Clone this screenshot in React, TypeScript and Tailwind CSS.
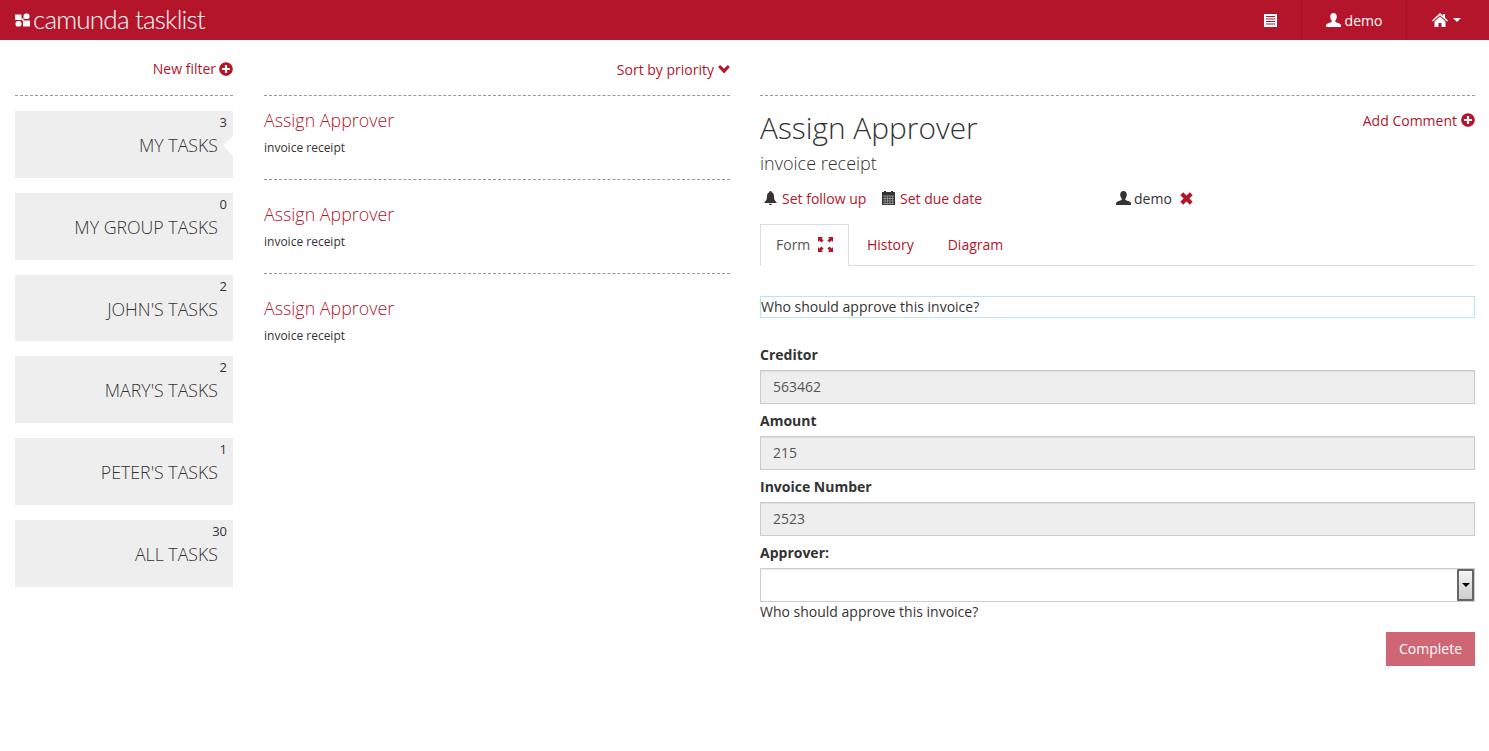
import { FaPlusCircle } from "react-icons/fa";

const filters = [
  { name: "MY TASKS", count: 3, active: true },
  { name: "MY GROUP TASKS", count: 0 },
  { name: "JOHN'S TASKS", count: 2 },
  { name: "MARY'S TASKS", count: 2 },
  { name: "PETER'S TASKS", count: 1 },
  { name: "ALL TASKS", count: 30 },
];

const fields = [
  { label: "Creditor", value: "563462" },
  { label: "Amount", value: "215" },
  { label: "Invoice Number", value: "2523" },
];

const Logo = () => (
  <svg width="15" height="14" viewBox="0 0 15 14" fill="white">
    <rect x="0" y="1.5" width="6.5" height="5.5" />
    <rect x="8.5" y="0.5" width="6" height="5.5" rx="2.6" />
    <rect x="0.5" y="8" width="6" height="5.5" rx="2.6" />
    <rect x="8" y="7.5" width="7" height="6" />
    <path d="M6 6.5l2.5-2v4z" />
  </svg>
);

const ListIcon = () => (
  <svg width="13" height="13" viewBox="0 0 13 13">
    <rect width="13" height="13" fill="white" />
    <path d="M2 2.5h9M2 5h9M2 7.500h9M2 10h9" stroke="#b5152b" strokeWidth="1" />
  </svg>
);

const ExpandIcon = () => (
  <svg width="15" height="15" viewBox="0 0 15 15" fill="#b5152b">
    <path d="M0 0h5L3.6 1.4 5.6 3.4 3.4 5.6 1.4 3.6 0 5zM15 0v5L13.6 3.6 11.6 5.6 9.4 3.4 11.4 1.4 10 0zM0 15v-5l1.4 1.4 2-2 2.2 2.2-2 2L5 15zM15 15h-5l1.4-1.4-2-2 2.2-2.2 2 2L15 10z" />
  </svg>
);

// glyphicon style bust, head narrowing to the neck and wide shoulders
const UserIcon = () => (
  <svg width="15" height="14" viewBox="0 0 15 14" fill="currentColor">
    <path d="M7.5 0C5.4 0 4.2 1.5 4.2 3.6c0 1.6.6 3 1.5 3.9v1.2C4.6 9.6.9 10.2.2 11.600L0 14h15l-.2-2.400c-.7-1.400-4.400-2-5.500-2.900V7.500c.9-.9 1.500-2.300 1.500-3.900C10.800 1.500 9.600 0 7.500 0z" />
  </svg>
);

const HomeIcon = () => (
  <svg width="16" height="14" viewBox="0 0 16 14" fill="currentColor">
    <path d="M8 0l3 2.800V1h2v3.700L16 7.500l-1 1-7-6.300-7 6.300-1-1z" />
    <path d="M8 3.500l5.500 5V14H9.500v-4h-3v4H2.500V8.500z" />
  </svg>
);

const BellIcon = () => (
  <svg width="13" height="14" viewBox="0 0 13 14" fill="currentColor">
    <path d="M6.500 0C5.800 0 5.400.5 5.400 1.200 3.600 1.800 3 3.400 3 5.200 3 8 2.400 9.600.5 11v1h12v-1C10.600 9.600 10 8 10 5.200c0-1.800-.6-3.400-2.400-4C7.600.5 7.200 0 6.500 0z" />
    <path d="M5 12.700h3C8 13.500 7.300 14 6.500 14S5 13.500 5 12.700z" />
  </svg>
);

const CalendarIcon = () => (
  <svg width="13" height="14" viewBox="0 0 13 14">
    <rect y="1" width="13" height="13" fill="#333" />
    <path d="M3 0v2.500M10 0v2.500" stroke="#333" strokeWidth="2" />
    <path d="M1 5h11M1 7.500h11M1 10h11M1 12.500h11M3 4.500v9M5.500 4.500v9M8 4.500v9M10.500 4.500v9" stroke="#999" strokeWidth="0.8" />
  </svg>
);

const ChevronIcon = () => (
  <svg width="12" height="9" viewBox="0 0 13 10" fill="#b5152b">
    <path d="M2.200 0L6.500 4.300 10.800 0 13 2.200 6.500 9.500 0 2.200z" />
  </svg>
);

const RemoveIcon = () => (
  <svg width="13" height="13" viewBox="0 0 13 13" fill="#b5152b">
    <path d="M3.200.3L6.500 3.600 9.800.3 12.700 3.200 9.400 6.500 12.700 9.800 9.800 12.700 6.500 9.400 3.200 12.700.3 9.800 3.600 6.500.3 3.200z" />
  </svg>
);

const App = () => {
  return (
    <div className="min-h-[751px] bg-white text-[14px] text-[#333] font-['Open_Sans',sans-serif]">
      <header className="h-10 bg-[#b5152b] flex items-center text-white">
        <div className="pl-[15px] flex items-center gap-[3px]">
          <Logo />
          <span className="font-['Lato',sans-serif] font-light text-[26px] leading-[38px] pb-[2px] tracking-[-0.8px]">camunda tasklist</span>
        </div>
        <div className="ml-auto flex h-full">
          <div className="w-[63px] flex items-center justify-center border-r border-[#a01226]"><ListIcon /></div>
          <div className="w-[105px] flex items-center justify-center gap-[4px] border-r border-[#a01226]">
            <UserIcon />
            <span>demo</span>
          </div>
          <div className="w-[82px] flex items-center gap-[5px] pl-[25px]">
            <HomeIcon />
            <span className="w-0 h-0 border-x-4 border-x-transparent border-t-4 border-t-white" />
          </div>
        </div>
      </header>

      <div className="flex pl-[15px] pr-[14px]">
        <aside className="w-[218px] shrink-0">
          <div className="h-[56px] border-b border-dashed border-[#999] flex items-center justify-end gap-[3px] pt-[2px] text-[#b5152b]">
            <span>New filter</span>
            <FaPlusCircle size={14} />
          </div>
          <div className="mt-[15px] flex flex-col gap-[15px]">
            {filters.map((f) => (
              <div key={f.name} className="relative h-[66.8px] bg-[#eee] pr-[15px] text-right">
                <div className="absolute right-[6px] top-[3px] text-[13px] leading-[16px]">{f.count}</div>
                <div className="pt-[21px] text-[17.75px] leading-[26px] font-light">{f.name}</div>
                {f.active && (
                  <span className="absolute right-0 top-[25px] w-0 h-0 border-y-[10px] border-y-transparent border-r-[10px] border-r-white" />
                )}
              </div>
            ))}
          </div>
        </aside>

        <main className="w-[466px] ml-[31px] shrink-0">
          <div className="h-[56px] border-b border-dashed border-[#999] flex items-center justify-end gap-[4px] pt-[4px] text-[#b5152b]">
            <span>Sort by priority</span>
            <ChevronIcon />
          </div>
          {[0, 1, 2].map((i) => (
            <div
              key={i}
              className={`${i === 0 ? "h-[84px] pt-[11px]" : "h-[94px] pt-[21px]"} ${i < 2 ? "border-b border-dashed border-[#999]" : ""}`}
            >
              <div className="text-[17.85px] leading-[26px] font-light text-[#b5152b]">Assign Approver</div>
              <div className="mt-[6px] text-[12px] leading-[17px]">invoice receipt</div>
            </div>
          ))}
        </main>

        <section className="w-[715px] ml-[30px] shrink-0">
          <div className="h-[56px] border-b border-dashed border-[#999]" />
          <div className="flex justify-between">
            <h1 className="mt-[10px] text-[29.85px] leading-[44px] font-light">Assign Approver</h1>
            <div className="mt-[14px] flex items-center gap-[4px] h-[20px] text-[#b5152b]">
              <span>Add Comment</span>
              <FaPlusCircle size={14} />
            </div>
          </div>
          <div className="text-[18px] leading-[26px] font-light">invoice receipt</div>
          <div className="mt-[12px] flex items-center h-[20px]">
            <div className="w-[122px] pl-[4px] flex items-center gap-[5px]">
              <BellIcon />
              <span className="text-[#b5152b]">Set follow up</span>
            </div>
            <div className="w-[234px] flex items-center gap-[5px]">
              <CalendarIcon />
              <span className="text-[#b5152b]">Set due date</span>
            </div>
            <div className="flex items-center gap-[3px]">
              <UserIcon />
              <span className="mr-[5px]">demo</span>
              <RemoveIcon />
            </div>
          </div>
          <div className="mt-[16px] flex h-[42px] border-b border-[#ddd]">
            <div className="h-[42px] w-[89px] border border-[#ddd] border-b-white bg-white flex items-center pl-[15px] pb-[2px] gap-[8px] text-[#555]">
              <span>Form</span>
              <ExpandIcon />
            </div>
            <div className="ml-[18px] leading-[41px] text-[#b5152b]">History</div>
            <div className="ml-[34px] leading-[41px] text-[#b5152b]">Diagram</div>
          </div>
          <div className="mt-[30px] h-[22px] border border-[#b6e8ee] leading-[20px]">Who should approve this invoice?</div>
          <div className="mt-[27px]">
            {fields.map((f) => (
              <div key={f.label} className="h-[66px]">
                <div className="font-bold leading-[20px] mb-[5px]">{f.label}</div>
                <div className="h-[34px] bg-[#eee] border border-[#ccc] px-3 leading-[32px] text-[#555] shadow-[inset_0_1px_1px_rgba(0,0,0,0.075)]">{f.value}</div>
              </div>
            ))}
            <div className="font-bold leading-[20px] mb-[5px]">Approver:</div>
            <div className="h-[34px] bg-white border border-[#ccc] flex justify-end items-stretch shadow-[inset_0_1px_1px_rgba(0,0,0,0.075)]">
              <div className="w-[17px] border-2 border-[#666] rounded-[1px] bg-gradient-to-b from-[#f4f4f4] to-[#ccc] flex items-center justify-center">
                <span className="w-0 h-0 border-x-[4px] border-x-transparent border-t-[4px] border-t-black" />
              </div>
            </div>
            <div className="leading-[20px]">Who should approve this invoice?</div>
          </div>
          <div className="mt-[10px] flex justify-end">
            <div className="w-[89px] h-[34px] pb-[1px] bg-[#cf6675] text-white flex items-center justify-center">Complete</div>
          </div>
        </section>
      </div>
    </div>
  );
};

export default App;
